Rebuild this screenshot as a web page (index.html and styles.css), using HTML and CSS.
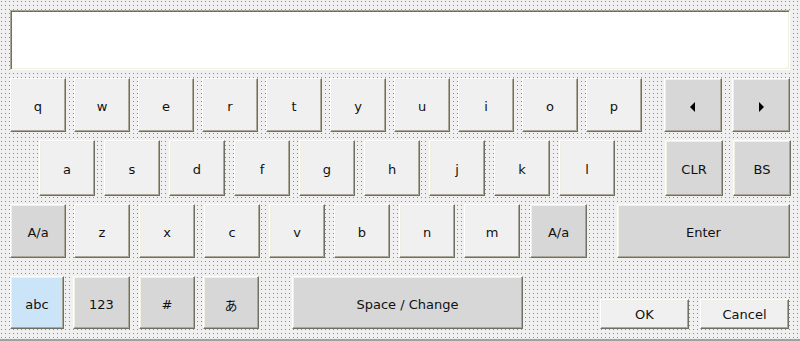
FILE: index.html
```html
<!DOCTYPE html>
<html lang="en">
<head>
<meta charset="UTF-8">
<meta name="viewport" content="width=device-width, initial-scale=1.0">
<title>Soft Keyboard</title>
<link rel="stylesheet" href="styles.css">
</head>
<body>

<div class="keyboard">
    <div class="input-box"></div>

    <div class="row row1">
        <div class="keys">
            <button class="key">q</button>
            <button class="key">w</button>
            <button class="key">e</button>
            <button class="key">r</button>
            <button class="key">t</button>
            <button class="key">y</button>
            <button class="key">u</button>
            <button class="key">i</button>
            <button class="key">o</button>
            <button class="key">p</button>
        </div>
        <div class="side">
            <button class="key fn">
                <svg width="6" height="10" viewBox="0 0 6 10"><path d="M5 0 L0 5 L5 10 Z" fill="#000"/></svg>
            </button>
            <button class="key fn">
                <svg width="6" height="10" viewBox="0 0 6 10"><path d="M1 0 L6 5 L1 10 Z" fill="#000"/></svg>
            </button>
        </div>
    </div>

    <div class="row row2">
        <div class="keys">
            <button class="key">a</button>
            <button class="key">s</button>
            <button class="key">d</button>
            <button class="key">f</button>
            <button class="key">g</button>
            <button class="key">h</button>
            <button class="key">j</button>
            <button class="key">k</button>
            <button class="key">l</button>
        </div>
        <div class="side">
            <button class="key fn">CLR</button>
            <button class="key fn">BS</button>
        </div>
    </div>

    <div class="row row3">
        <button class="key fn shift-left">A/a</button>
        <div class="keys">
            <button class="key">z</button>
            <button class="key">x</button>
            <button class="key">c</button>
            <button class="key">v</button>
            <button class="key">b</button>
            <button class="key">n</button>
            <button class="key">m</button>
            <button class="key fn shift-right">A/a</button>
        </div>
        <button class="key fn enter">Enter</button>
    </div>

    <div class="row row4">
        <button class="key mode active">abc</button>
        <button class="key fn mode-num">123</button>
        <button class="key fn mode-sym">#</button>
        <button class="key fn mode-kana">あ</button>
        <button class="key fn space">Space / Change</button>
        <div class="dialog-buttons">
            <button class="key dlg">OK</button>
            <button class="key dlg">Cancel</button>
        </div>
    </div>
</div>

</body>
</html>
```

FILE: styles.css
```css
html, body {
    margin: 0;
    padding: 0;
}
body {
    width: 800px;
    height: 339px;
    overflow: hidden;
    border-bottom: 2px solid #a0a0a0;
    background-color: #f0f0f0;
    background-image: conic-gradient(at 1px 1px, transparent 75%, #8c8c8c 0);
    background-size: 4px 4px;
    background-position: 1px 1px;
    font-family: "DejaVu Sans", "Noto Sans CJK JP", sans-serif;
    font-size: 13px;
    color: #111;
}
.keyboard {
    padding: 10px 0 0 0;
}
.input-box {
    margin-left: 10px;
    width: 780px;
    height: 60px;
    box-sizing: border-box;
    background: #fff;
    border-top: 1px solid #aca899;
    border-left: 1px solid #aca899;
    border-right: 1px solid #fff;
    border-bottom: 1px solid #fff;
    box-shadow: inset 1px 1px #716f64, inset -1px -1px #f1efe2;
}
.row {
    display: flex;
    align-items: flex-start;
}
.keys {
    display: flex;
}
.side {
    display: flex;
    gap: 10px;
}
.key {
    box-sizing: border-box;
    width: 56px;
    height: 54px;
    margin: 0;
    padding: 3px 0 0 0;
    background: #f0f0f0;
    border-top: 1px solid #fff;
    border-left: 1px solid #fff;
    border-right: 1px solid #716f64;
    border-bottom: 1px solid #716f64;
    box-shadow: inset -1px -1px #aca899, inset 1px 1px #f1efe2;
    font-family: inherit;
    font-size: 13px;
    color: #111;
    display: flex;
    align-items: center;
    justify-content: center;
    cursor: pointer;
}
.key.fn {
    background: #d7d7d7;
}
.key.active {
    background: #cce4f7;
}

.row1 {
    margin-top: 8px;
    padding-left: 10px;
}
.row1 .keys {
    gap: 8px;
}
.row1 .side {
    margin-left: 22px;
}
.row1 .side .key {
    width: 58px;
}

.row2 {
    margin-top: 8px;
    padding-left: 39px;
}
.row2 .key {
    height: 56px;
}
.row2 .keys {
    gap: 9px;
}
.row2 .side {
    margin-left: 50px;
}
.row2 .side .key {
    width: 58px;
}

.row3 {
    margin-top: 8px;
    padding-left: 10px;
}
.row3 .keys {
    gap: 9px;
    margin-left: 8px;
}
.row3 .shift-right {
    width: 57px;
    margin-left: 1px;
}
.row3 .enter {
    width: 173px;
    margin-left: 30px;
}

.row4 {
    margin-top: 18px;
    padding-left: 10px;
}
.row4 .key {
    height: 53px;
}
.row4 .mode {
    width: 54px;
}
.row4 .mode-num {
    width: 57px;
    margin-left: 9px;
}
.row4 .mode-sym {
    margin-left: 9px;
}
.row4 .mode-kana {
    margin-left: 8px;
}
.row4 .space {
    width: 231px;
    margin-left: 33px;
}
.dialog-buttons {
    display: flex;
    gap: 11px;
    margin-left: 77px;
    margin-top: 23px;
}
.dialog-buttons .key {
    width: 89px;
    height: 30px;
    padding-top: 1px;
}
```
